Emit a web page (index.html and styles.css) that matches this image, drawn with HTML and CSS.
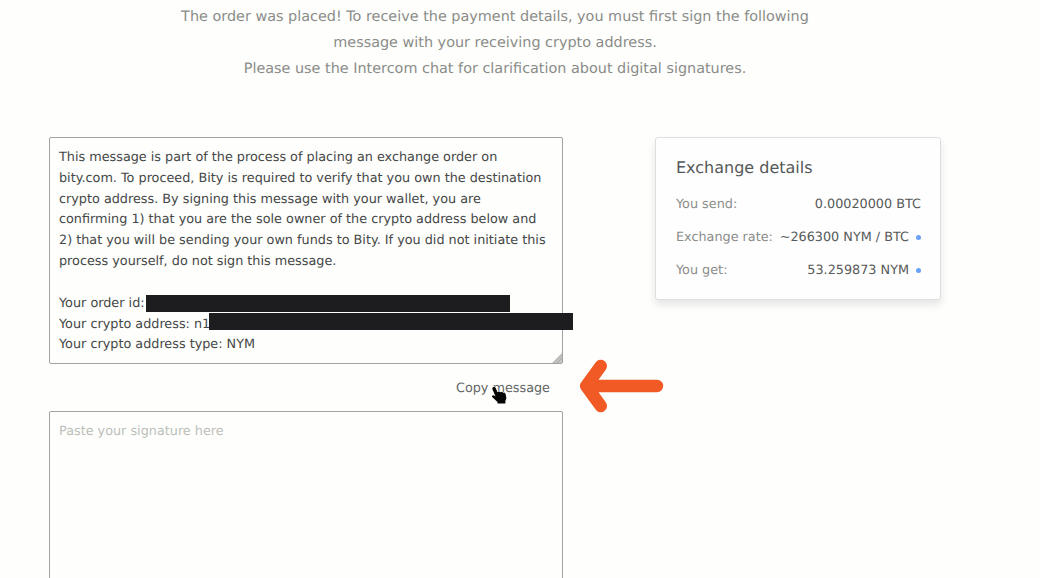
FILE: index.html
```html
<!DOCTYPE html>
<html lang="en">
<head>
<meta charset="utf-8">
<title>Sign your order</title>
<link rel="stylesheet" href="styles.css">
</head>
<body>
<main class="page">
  <p class="intro">The order was placed! To receive the payment details, you must first sign the following<br>message with your receiving crypto address.<br>Please use the Intercom chat for clarification about digital signatures.</p>
  <div class="columns">
    <section class="sign">
      <div class="field message">
        <p class="text">This message is part of the process of placing an exchange order on<br>bity.com. To proceed, Bity is required to verify that you own the destination<br>crypto address. By signing this message with your wallet, you are<br>confirming 1) that you are the sole owner of the crypto address below and<br>2) that you will be sending your own funds to Bity. If you did not initiate this<br>process yourself, do not sign this message.<br><br>Your order id:<br>Your crypto address: n1<br>Your crypto address type: NYM</p>
        <span class="redact redact-id"></span>
        <span class="redact redact-address"></span>
        <svg class="grip" viewBox="0 0 10 10"><path d="M10 0V10H0Z" fill="#c4c4c4"/><path d="M1.500 10L10 1.500M5 10L10 5" stroke="#a8a8a8" stroke-width=".8"/></svg>
      </div>
      <div class="actions">
        <span class="copy">Copy message</span>
        <svg class="pointer" viewBox="0 0 17 19"><path d="M2.100 1.200C3.200.6 4.300 1.100 4.800 2.200L6.500 6.200 8 5.600 9.400 6.300 11 5.800 12.200 6.700 13.400 6.500 14.700 8.200 15.400 12.200 14.400 14.700V17.500H6.500V16L1.400 11.200C.5 10.200 1.300 8.900 2.600 9.200L4.500 10.200 1.500 3.500C1.100 2.500 1.300 1.600 2.100 1.200Z" fill="#050505" stroke="#fff" stroke-width="1" paint-order="stroke"/></svg>
        <svg class="arrow" viewBox="0 0 86 56"><path d="M79 28H9M22.800 8L8.200 28L22.800 48" fill="none" stroke="#f15a24" stroke-width="12.400" stroke-linecap="round" stroke-linejoin="round"/></svg>
      </div>
      <div class="field signature"><p class="placeholder">Paste your signature here</p></div>
    </section>
    <aside class="card">
      <h2 class="title">Exchange details</h2>
      <div class="row"><span class="label">You send:</span><span class="value">0.00020000 BTC</span></div>
      <div class="row"><span class="label">Exchange rate:</span><span class="value">~266300 NYM / BTC<i class="dot"></i></span></div>
      <div class="row"><span class="label">You get:</span><span class="value">53.259873 NYM<i class="dot"></i></span></div>
    </aside>
  </div>
</main>
</body>
</html>
```
FILE: styles.css
```css
* { box-sizing: border-box; }
body {
  margin: 0;
  height: 578px;
  overflow: hidden;
  background: #fefefc;
  color: #444747;
  font: 12.8px/20.83px "DejaVu Sans", sans-serif;
  text-rendering: geometricPrecision;
}
p, h2 { margin: 0; font-weight: 400; }
.page { padding: 5px 99px 0 49px; }
.intro {
  width: 892px;
  color: #8a8c89;
  font-size: 14.4px;
  line-height: 25.8px;
  text-align: center;
  white-space: nowrap;
}
.columns {
  display: flex;
  justify-content: space-between;
  align-items: flex-start;
  margin-top: 54.6px;
}
.sign { width: 514px; }
.field {
  position: relative;
  border: 1px solid #a3a4a2;
  border-radius: 2px;
  padding: 10px 9px 0;
  white-space: nowrap;
}
.message { height: 227px; }
.signature { height: 190px; }
.placeholder { color: #bcbeba; }
.redact {
  position: absolute;
  height: 17px;
  background: #1d1d1f;
}
.redact-id { left: 96px; top: 157.5px; width: 364px; }
.redact-address { left: 159px; top: 175.5px; width: 364px; }
.grip { position: absolute; right: 0; bottom: 0; width: 10px; height: 10px; }
.actions {
  position: relative;
  display: flex;
  justify-content: flex-end;
  align-items: center;
  height: 47px;
  padding: 3px 13px 0 0;
  color: #626565;
}
.pointer { position: absolute; left: 442px; top: 22px; width: 17px; height: 19px; }
.arrow { position: absolute; left: 529px; top: -6px; width: 86px; height: 56px; }
.card {
  width: 286px;
  height: 163px;
  padding: 17px 19px 0 20px;
  border: 1px solid #dce0e1;
  border-radius: 3px;
  background: #fefefe;
  box-shadow: 0 5px 9px rgba(0, 0, 0, .1);
}
.title {
  margin-bottom: 11px;
  color: #555858;
  font-size: 16px;
  line-height: 26px;
}
.row {
  display: flex;
  justify-content: space-between;
  height: 33px;
  line-height: 26px;
  white-space: nowrap;
}
.label { color: #8b8d8a; }
.value { display: flex; align-items: center; height: 26px; color: #565959; }
.dot {
  width: 5px;
  height: 5px;
  margin-left: 7px;
  border-radius: 50%;
  background: #69a0fa;
}
```
